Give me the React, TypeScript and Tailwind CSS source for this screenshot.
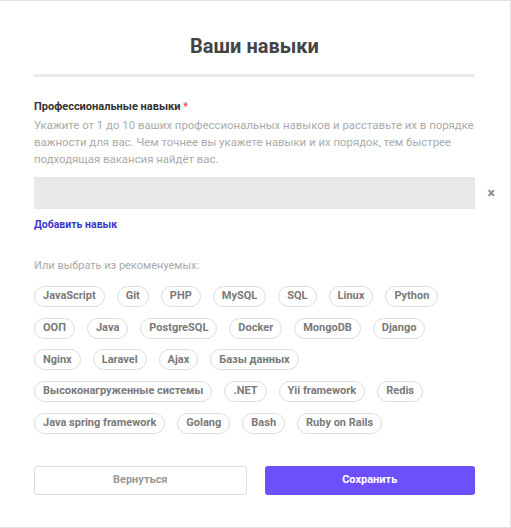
const skills = [
  ["JavaScript", "Git", "PHP", "MySQL", "SQL", "Linux", "Python"],
  ["ООП", "Java", "PostgreSQL", "Docker", "MongoDB", "Django"],
  ["Nginx", "Laravel", "Ajax", "Базы данных"],
  ["Высоконагруженные системы", ".NET", "Yii framework", "Redis"],
  ["Java spring framework", "Golang", "Bash", "Ruby on Rails"],
]

function Chip({ label }: { label: string }) {
  return (
    <span className="h-[21px] inline-flex items-center px-[8px] rounded-full border border-[#dcdcdc] text-[11px] font-bold text-[#7a7a7a]">
      {label}
    </span>
  )
}

export default function App() {
  return (
    <div className="w-[511px] h-[528px] bg-white border-t border-r border-b border-[#e0e0e0] font-['Roboto',sans-serif] overflow-hidden">
      <div className="pl-[34px] pr-[35px] pt-[31px]">
        <h1 className="text-center text-[20px] font-bold text-[#444] leading-[28px]">Ваши навыки</h1>
        <div className="mt-[14px] h-[3px] bg-[#ebebeb]" />

        <div className="mt-[22px] text-[11px] font-bold text-[#333] leading-[16px]">
          Профессиональные навыки <span className="text-[#f04040] text-[10px] align-top">*</span>
        </div>
        <p className="mt-[2px] text-[11.4px] leading-[17px] text-[#ababab]">
          Укажите от 1 до 10 ваших профессиональных навыков и расставьте их в порядке важности для вас. Чем точнее вы укажете навыки и их порядок, тем быстрее подходящая вакансия найдёт вас.
        </p>

        <div className="mt-[9px] relative">
          <div className="h-[32px] bg-[#e9e9e9]" />
          <span className="absolute right-[-20px] top-[6px] text-[14px] font-bold text-[#888]">×</span>
        </div>

        <div className="mt-[8px] text-[10.5px] font-bold text-[#3838c8] leading-[16px]">Добавить навык</div>

        <div className="mt-[25px] text-[11px] text-[#aaa] leading-[16px]">Или выбрать из рекоменуемых:</div>

        <div className="mt-[12px] flex flex-col gap-[10.7px]">
          {skills.map((row, i) => (
            <div key={i} className="flex gap-[12px]">
              {row.map((s) => (
                <Chip key={s} label={s} />
              ))}
            </div>
          ))}
        </div>

        <div className="mt-[32px] flex gap-[18px]">
          <button className="flex-1 h-[29px] rounded-[3px] border border-[#dcdcdc] text-[11px] font-bold text-[#999]">
            Вернуться
          </button>
          <button className="flex-1 h-[29px] rounded-[3px] bg-[#6d50fc] text-[11px] font-bold text-white">
            Сохранить
          </button>
        </div>
      </div>
    </div>
  )
}
